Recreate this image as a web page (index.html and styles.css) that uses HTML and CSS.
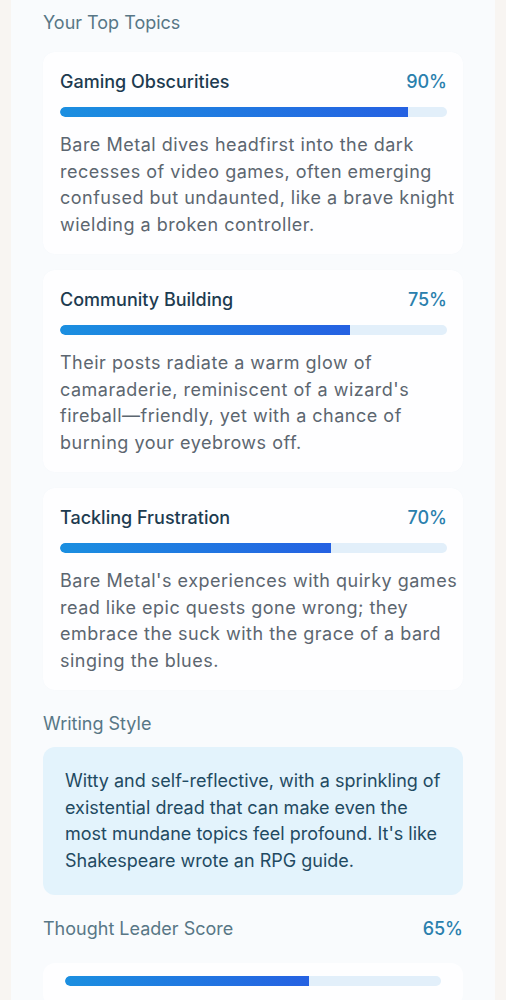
FILE: index.html
```html
<!DOCTYPE html>
<html lang="en">
<head>
<meta charset="utf-8">
<title>Top Topics</title>
<link rel="stylesheet" href="styles.css">
</head>
<body>
<main class="panel">
  <h2 class="section-title">Your Top Topics</h2>
  <div class="topics">
    <section class="topic-card">
      <div class="topic-head"><span class="topic-name">Gaming Obscurities</span><span class="topic-pct">90%</span></div>
      <div class="bar"><div class="bar-fill" style="width:90%"></div></div>
      <p class="topic-desc">Bare Metal dives headfirst into the dark recesses of video games, often emerging confused but undaunted, like a brave knight wielding a broken controller.</p>
    </section>
    <section class="topic-card">
      <div class="topic-head"><span class="topic-name">Community Building</span><span class="topic-pct">75%</span></div>
      <div class="bar"><div class="bar-fill" style="width:75%"></div></div>
      <p class="topic-desc">Their posts radiate a warm glow of camaraderie, reminiscent of a wizard's fireball—friendly, yet with a chance of burning your eyebrows off.</p>
    </section>
    <section class="topic-card">
      <div class="topic-head"><span class="topic-name">Tackling Frustration</span><span class="topic-pct">70%</span></div>
      <div class="bar"><div class="bar-fill" style="width:70%"></div></div>
      <p class="topic-desc">Bare Metal's experiences with quirky games read like epic quests gone wrong; they embrace the suck with the grace of a bard singing the blues.</p>
    </section>
  </div>

  <h2 class="section-title style-title">Writing Style</h2>
  <div class="style-box">
    <p>Witty and self-reflective, with a sprinkling of existential dread that can make even the most mundane topics feel profound. It's like Shakespeare wrote an RPG guide.</p>
  </div>

  <div class="score-head">
    <h2 class="section-title">Thought Leader Score</h2>
    <span class="score-pct">65%</span>
  </div>
  <div class="score-card">
    <div class="bar"><div class="bar-fill" style="width:65%"></div></div>
  </div>
</main>
</body>
</html>
```

FILE: styles.css
```css
* { box-sizing: border-box; }
html, body { margin: 0; padding: 0; }
body {
  background: #f8f5f2;
  font-family: Inter, "Noto Sans", sans-serif;
  padding: 0 11px;
}
.panel {
  background: #f9fbfd;
  padding: 11px 32px 40px;
  min-height: 1000px;
}
.section-title {
  margin: 0;
  font-size: 18px;
  line-height: 24px;
  font-weight: 400;
  color: #587786;
}
.topics {
  display: flex;
  flex-direction: column;
  gap: 16px;
  margin-top: 17px;
}
.topic-card {
  background: #fefeff;
  border-radius: 12px;
  padding: 18px 16px 16px 17px;
  box-shadow: 0 0 1px rgba(210, 222, 235, 0.2);
}
.topic-head {
  display: flex;
  justify-content: space-between;
  align-items: center;
  line-height: 24px;
}
.topic-name {
  font-size: 18px;
  font-weight: 500;
  color: #1d3b50;
}
.topic-pct {
  font-size: 18px;
  font-weight: 500;
  color: #2a80ad;
}
.bar {
  margin-top: 13px;
  height: 10px;
  border-radius: 5px;
  background: #e2effa;
  overflow: hidden;
}
.bar-fill {
  height: 100%;
  border-radius: 5px 0 0 5px;
  background: linear-gradient(90deg, #1b8fe0, #2561e2);
}
.topic-desc {
  margin: 15px -13px 0 0;
  font-size: 18px;
  letter-spacing: 0.5px;
  line-height: 26.5px;
  color: #5c6670;
}
.style-title { margin-top: 22px; }
.style-box {
  margin-top: 11px;
  background: #e3f3fc;
  border-radius: 12px;
  padding: 21px 22px;
}
.style-box p {
  margin: 0;
  font-size: 18px;
  line-height: 26.5px;
  color: #1f4a62;
}
.score-head {
  margin-top: 22px;
  display: flex;
  justify-content: space-between;
  align-items: center;
}
.score-pct {
  font-size: 18px;
  font-weight: 500;
  color: #2a80ad;
  line-height: 24px;
}
.score-card {
  margin-top: 22px;
  background: #fefeff;
  border-radius: 12px;
  padding: 13px 22px 20px;
}
.score-card .bar { margin-top: 0; }
```
